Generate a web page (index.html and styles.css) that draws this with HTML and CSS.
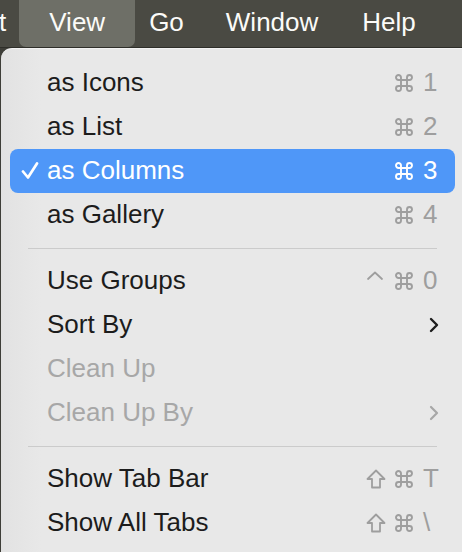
FILE: index.html
```html
<!DOCTYPE html>
<html>
<head>
<meta charset="utf-8">
<link rel="stylesheet" href="styles.css">
</head>
<body>
<div class="menubar">
  <span class="mb-item">t</span>
  <span class="mb-item active">View</span>
  <span class="mb-item">Go</span>
  <span class="mb-item">Window</span>
  <span class="mb-item help">Help</span>
</div>
<div class="menu">
  <div class="row"><span class="check"></span><span class="label">as Icons</span><span class="sc"><span class="mod"></span><svg class="cmd" viewBox="0 0 20 20"><path d="M7 7V4.5A2.5 2.5 0 1 0 4.5 7H15.5A2.5 2.5 0 1 0 13 4.5V15.5A2.5 2.5 0 1 0 15.5 13H4.5A2.5 2.5 0 1 0 7 15.5Z"/></svg><span class="key">1</span></span></div>
  <div class="row"><span class="check"></span><span class="label">as List</span><span class="sc"><span class="mod"></span><svg class="cmd" viewBox="0 0 20 20"><path d="M7 7V4.5A2.5 2.5 0 1 0 4.5 7H15.5A2.5 2.5 0 1 0 13 4.5V15.5A2.5 2.5 0 1 0 15.5 13H4.5A2.5 2.5 0 1 0 7 15.5Z"/></svg><span class="key">2</span></span></div>
  <div class="row selected"><span class="check"><svg width="18" height="18" viewBox="0 0 18 18"><polyline points="2,9.5 7,15.5 16,1.5" fill="none" stroke="#fff" stroke-width="2.7" stroke-linecap="round" stroke-linejoin="round"/></svg></span><span class="label">as Columns</span><span class="sc"><span class="mod"></span><svg class="cmd" viewBox="0 0 20 20"><path d="M7 7V4.5A2.5 2.5 0 1 0 4.5 7H15.5A2.5 2.5 0 1 0 13 4.5V15.5A2.5 2.5 0 1 0 15.5 13H4.5A2.5 2.5 0 1 0 7 15.5Z"/></svg><span class="key">3</span></span></div>
  <div class="row"><span class="check"></span><span class="label">as Gallery</span><span class="sc"><span class="mod"></span><svg class="cmd" viewBox="0 0 20 20"><path d="M7 7V4.5A2.5 2.5 0 1 0 4.5 7H15.5A2.5 2.5 0 1 0 13 4.5V15.5A2.5 2.5 0 1 0 15.5 13H4.5A2.5 2.5 0 1 0 7 15.5Z"/></svg><span class="key">4</span></span></div>
  <div class="sep"></div>
  <div class="row"><span class="check"></span><span class="label">Use Groups</span><span class="sc"><svg class="mod" viewBox="0 0 20 20"><polyline points="2,8 9,1.5 16,8"/></svg><svg class="cmd" viewBox="0 0 20 20"><path d="M7 7V4.5A2.5 2.5 0 1 0 4.5 7H15.5A2.5 2.5 0 1 0 13 4.5V15.5A2.5 2.5 0 1 0 15.5 13H4.5A2.5 2.5 0 1 0 7 15.5Z"/></svg><span class="key">0</span></span></div>
  <div class="row"><span class="check"></span><span class="label">Sort By</span><span class="arrow"><svg width="12" height="16" viewBox="0 0 12 16"><polyline points="3,2 9,8 3,14" fill="none" stroke="#1d1d1d" stroke-width="2.4" stroke-linecap="round" stroke-linejoin="round"/></svg></span></div>
  <div class="row disabled"><span class="check"></span><span class="label">Clean Up</span></div>
  <div class="row disabled"><span class="check"></span><span class="label">Clean Up By</span><span class="arrow"><svg width="12" height="16" viewBox="0 0 12 16"><polyline points="3,2 9,8 3,14" fill="none" stroke="#a7a7a7" stroke-width="2.2" stroke-linecap="round" stroke-linejoin="round"/></svg></span></div>
  <div class="sep"></div>
  <div class="row"><span class="check"></span><span class="label">Show Tab Bar</span><span class="sc"><svg class="mod" viewBox="0 0 20 20"><path d="M10 1.5L18.5 10H14V18.5H6V10H1.5Z"/></svg><svg class="cmd" viewBox="0 0 20 20"><path d="M7 7V4.5A2.5 2.5 0 1 0 4.5 7H15.5A2.5 2.5 0 1 0 13 4.5V15.5A2.5 2.5 0 1 0 15.5 13H4.5A2.5 2.5 0 1 0 7 15.5Z"/></svg><span class="key">T</span></span></div>
  <div class="row"><span class="check"></span><span class="label">Show All Tabs</span><span class="sc"><svg class="mod" viewBox="0 0 20 20"><path d="M10 1.5L18.5 10H14V18.5H6V10H1.5Z"/></svg><svg class="cmd" viewBox="0 0 20 20"><path d="M7 7V4.5A2.5 2.5 0 1 0 4.5 7H15.5A2.5 2.5 0 1 0 13 4.5V15.5A2.5 2.5 0 1 0 15.5 13H4.5A2.5 2.5 0 1 0 7 15.5Z"/></svg><span class="key">\</span></span></div>
</div>
</body>
</html>
```
FILE: styles.css
```css
html, body {
  margin: 0;
  padding: 0;
  background: #3e3e38;
}
body {
  width: 462px;
  height: 552px;
  overflow: hidden;
  font-family: "Liberation Sans", Arial, sans-serif;
}
.menubar {
  height: 47px;
  background: #4a4a43;
  display: flex;
  align-items: stretch;
  margin-left: -22px;
  color: #fbfbf8;
  font-size: 26px;
  border-bottom: 1px solid #2e2e29;
}
.mb-item {
  padding: 0 21px 3px;
  display: flex;
  align-items: center;
}
.mb-item.active {
  margin: 0 -7px 0 -8px;
  padding: 0 30px 3px;
  background: #6e6f67;
  border-radius: 0 0 7px 7px;
}
.mb-item.help {
  margin-left: 2px;
}
.menu {
  margin-left: 1px;
  background: linear-gradient(90deg, #e2e2e2 0, #e8e8e8 40px, #e8e8e8 100%);
  border-top-left-radius: 11px;
  padding: 12px 0 20px;
  height: 520px;
  box-sizing: border-box;
  border-top: 1px solid #f2f2f2;
}
.row {
  height: 44px;
  margin: 0 7px 0 9px;
  padding: 0 17px 0 0;
  display: flex;
  align-items: center;
  font-size: 26px;
  color: #1c1c1c;
  border-radius: 8px;
}
.check {
  width: 37px;
  display: flex;
  justify-content: flex-end;
  padding-right: 8px;
  box-sizing: border-box;
}
.check svg { display: block; }
.label {
  flex: 1;
  padding-bottom: 2px;
}
.row.selected {
  background: #4f97f8;
  color: #ffffff;
}
.row.disabled { color: #a7a7a7; }
.sc {
  display: flex;
  align-items: center;
  color: #9e9e9e;
  font-size: 26px;
}
.row.selected .sc { color: #ffffff; }
.mod {
  width: 20px;
  height: 20px;
  display: block;
  fill: none;
  stroke: currentColor;
  stroke-width: 1.8;
  stroke-linejoin: round;
  stroke-linecap: round;
}
.cmd {
  margin-left: 8px;
  width: 20px;
  height: 20px;
  display: block;
  fill: none;
  stroke: currentColor;
  stroke-width: 1.9;
}
.key {
  margin-left: 9px;
  width: 15px;
  text-align: left;
  padding-bottom: 2px;
}
.arrow {
  display: flex;
  align-items: center;
  margin-right: -2px;
}
.arrow svg { display: block; }
.sep {
  height: 22px;
  margin: 0 25px 0 27px;
  display: flex;
  align-items: center;
}
.sep::before {
  content: "";
  flex: 1;
  height: 1px;
  background: #cbcbcb;
}
```
